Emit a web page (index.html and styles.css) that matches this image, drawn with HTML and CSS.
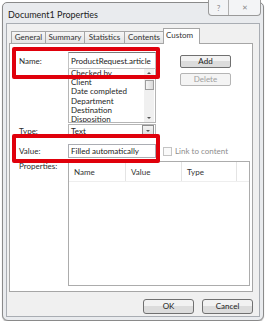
FILE: index.html
```html
<!doctype html>
<html lang="en">
	<head>
		<meta charset="UTF-8" />
		<title>Document1 Properties</title>
		<link rel="stylesheet" href="styles.css">
	</head>

	<body>
		<div class="window">
			<div class="titlebar">
				<span class="title">Document1 Properties</span>
				<div class="caption-buttons">
					<span class="cap-btn help">?</span>
					<span class="cap-btn close">&#x2715;</span>
				</div>
			</div>
			<div class="client">
				<div class="tabs">
					<span class="tab t1">General</span>
					<span class="tab t2">Summary</span>
					<span class="tab t3">Statistics</span>
					<span class="tab t4">Contents</span>
					<span class="tab active">Custom</span>
				</div>
				<div class="panel">
					<div class="form">
						<label class="lbl lbl-name">Name:</label>
						<div class="textbox name-box">ProductRequest.article</div>
						<div class="side-buttons">
							<button class="btn">Add</button>
							<button class="btn disabled">Delete</button>
						</div>

						<div class="listbox">
							<div class="items">
								<div>Checked by</div>
								<div>Client</div>
								<div>Date completed</div>
								<div>Department</div>
								<div>Destination</div>
								<div>Disposition</div>
							</div>
							<div class="scrollbar">
								<span class="arrow up"></span>
								<span class="thumb"></span>
								<span class="arrow down"></span>
							</div>
						</div>

						<label class="lbl lbl-type">Type:</label>
						<div class="combo">
							<span>Text</span>
							<span class="drop"><span class="arrow down"></span></span>
						</div>

						<label class="lbl lbl-value">Value:</label>
						<div class="textbox value-box">Filled automatically</div>
						<div class="link">
							<span class="check"></span>
							<span>Link to content</span>
						</div>

						<label class="lbl lbl-props">Properties:</label>
						<div class="listview">
							<div class="lv-head">
								<span class="col c1">Name</span>
								<span class="col c2">Value</span>
								<span class="col c3">Type</span>
								<span class="col c4"></span>
							</div>
						</div>
					</div>
					<div class="highlight hl-name"></div>
					<div class="highlight hl-value"></div>
				</div>
				<div class="footer">
					<button class="btn big">OK</button>
					<button class="btn big">Cancel</button>
				</div>
			</div>
		</div>
	</body>
</html>
```

FILE: styles.css
```css
body {
	margin: 0;
	background-color: #fff;
	font-family: Lato, "Open Sans", sans-serif;
	font-size: 8px;
	color: #1e1e1e;
}

.window {
	margin: 2px 0 0 2px;
	width: 262px;
	height: 319px;
	border: 1px solid #8a8a8a;
	border-radius: 5px 5px 6px 6px;
	background-color: #e9ebee;
	padding: 0 3px 3px 3px;
	box-sizing: border-box;
	display: flex;
	flex-direction: column;
	box-shadow: 0 1px 1px #bbb;
}

.titlebar {
	height: 20px;
	display: flex;
	justify-content: space-between;
	align-items: flex-start;
}

.title {
	font-size: 9px;
	margin: 6px 0 0 2px;
	color: #222;
}

.caption-buttons {
	display: flex;
	margin-top: -3px;
	margin-right: -1px;
	border: 1px solid #9a9a9a;
	border-top: none;
	border-radius: 0 0 4px 4px;
	background-color: #f3f4f6;
}

.cap-btn {
	height: 15px;
	display: flex;
	align-items: center;
	justify-content: center;
	color: #8a8a8a;
	font-size: 8px;
}

.help {
	width: 19px;
	border-right: 1px solid #b0b0b0;
}

.close {
	width: 31px;
	font-size: 7px;
}

.client {
	flex: 1;
	border: 1px solid #a9adb3;
	background-color: #f0f0f0;
	display: flex;
	flex-direction: column;
	padding: 0 6px 0 2px;
}

.tabs {
	display: flex;
	align-items: flex-end;
	margin: 3px 0 0 2px;
	height: 16px;
}

.tab {
	height: 11px;
	line-height: 11px;
	border: 1px solid #a6a6a6;
	border-bottom: none;
	margin-right: -1px;
	background: linear-gradient(#f6f6f6, #e3e3e3);
	color: #333;
	box-sizing: content-box;
	text-align: center;
}

.t1 {
	width: 33px;
}

.t2 {
	width: 38px;
}

.t3 {
	width: 39px;
}

.t4 {
	width: 38px;
}

.tab.active {
	width: 26px;
	height: 15px;
	line-height: 12px;
	background: #fff;
	position: relative;
	z-index: 1;
	margin-bottom: -1px;
	padding: 0 7px 0 2px;
	text-align: left;
}

.panel {
	position: relative;
	height: 247px;
	border: 1px solid #a6a6a6;
	background-color: #fff;
}

.form {
	display: grid;
	grid-template-columns: 49px 88px 24px 1fr;
	padding: 8px 0 0 9px;
}

.lbl {
	grid-column: 1;
	display: flex;
	align-items: center;
	color: #2a2a2a;
}

.lbl-name {
	grid-row: 1;
}

.textbox {
	grid-column: 2;
	border: 1px solid #abadb3;
	box-sizing: border-box;
	padding-left: 2px;
	display: flex;
	align-items: center;
	color: #1a1a1a;
	white-space: nowrap;
	overflow: hidden;
}

.name-box {
	grid-row: 1;
	height: 17px;
	border-color: #7a7a7a #c3c3c3 #c3c3c3 #c3c3c3;
}

.side-buttons {
	grid-column: 4;
	grid-row: 1 / 3;
	display: flex;
	flex-direction: column;
	gap: 5px;
	margin-top: 3px;
}

.btn {
	font-family: Lato, "Open Sans", sans-serif;
	font-size: 8px;
	width: 51px;
	height: 13px;
	padding: 0;
	border: 1px solid #707070;
	border-radius: 2px;
	background: linear-gradient(#f2f2f2 50%, #dcdcdc 50%);
	color: #222;
	line-height: 11px;
}

.btn.disabled {
	border-color: #b5b5b5;
	background: #f4f4f4;
	color: #a0a0a0;
}

.listbox {
	grid-column: 2;
	grid-row: 2;
	height: 54px;
	border: 1px solid #b5b5b5;
	border-top: none;
	box-sizing: border-box;
	display: flex;
	overflow: hidden;
}

.items {
	flex: 1;
	padding: 0 0 0 2px;
	line-height: 9.2px;
	margin-top: 0;
}

.scrollbar {
	width: 10px;
	margin-right: 1px;
	background-color: #f0f0f0;
	display: flex;
	flex-direction: column;
	align-items: center;
	justify-content: space-between;
	padding: 3px 0 3px 0;
	box-sizing: border-box;
}

.thumb {
	width: 7px;
	height: 8px;
	border: 1px solid #9e9e9e;
	background: linear-gradient(90deg, #f5f5f5, #dadada);
	margin-top: -22px;
}

.arrow {
	width: 0;
	height: 0;
	border-left: 2px solid transparent;
	border-right: 2px solid transparent;
}

.arrow.up {
	border-bottom: 2px solid #555;
}

.arrow.down {
	border-top: 2px solid #555;
}

.lbl-type {
	grid-row: 3;
	margin-top: 1px;
}

.combo {
	grid-column: 2;
	grid-row: 3;
	margin-top: 1px;
	height: 13px;
	border: 1px solid #b5b5b5;
	box-sizing: border-box;
	display: flex;
	justify-content: space-between;
	align-items: center;
	padding-left: 2px;
}

.drop {
	width: 10px;
	height: 9px;
	margin-right: 1px;
	border: 1px solid #8f8f8f;
	background: linear-gradient(#f4f4f4, #dedede);
	display: flex;
	align-items: center;
	justify-content: center;
}

.lbl-value {
	grid-row: 4;
	margin-top: 7px;
}

.value-box {
	grid-row: 4;
	margin-top: 7px;
	height: 14px;
}

.link {
	grid-column: 3 / 5;
	grid-row: 4;
	margin: 7px 0 0 7px;
	display: flex;
	align-items: center;
	gap: 3px;
	color: #8e8e8e;
}

.check {
	width: 7px;
	height: 7px;
	border: 1px solid #c4c4c4;
	background: #fafafa;
}

.lbl-props {
	grid-row: 5;
	align-items: flex-start;
	margin-top: 3px;
	padding-top: 0;
}

.listview {
	grid-column: 2 / 5;
	grid-row: 5;
	margin-top: 3px;
	width: 182px;
	height: 125px;
	border: 1px solid #acacac;
	box-sizing: border-box;
}

.lv-head {
	display: flex;
	height: 20px;
	border-bottom: 1px solid #eeeeee;
	box-sizing: border-box;
}

.col {
	height: 100%;
	display: flex;
	align-items: center;
	padding-left: 5px;
	border-right: 1px solid #e4e4e4;
	box-sizing: border-box;
	color: #333;
}

.c1 {
	width: 57px;
}

.c2 {
	width: 56px;
}

.c3 {
	width: 55px;
}

.c4 {
	flex: 1;
	border-right: none;
}

.highlight {
	position: absolute;
	left: 2px;
	width: 148px;
	border: 4px solid #e0000b;
	border-radius: 2px;
	box-sizing: border-box;
	pointer-events: none;
}

.hl-name {
	top: 3px;
	height: 32px;
}

.hl-value {
	top: 90px;
	height: 29px;
}

.footer {
	display: flex;
	justify-content: flex-end;
	gap: 8px;
	padding-top: 7px;
}

.btn.big {
	width: 51px;
	height: 15px;
	border-radius: 3px;
}
```
